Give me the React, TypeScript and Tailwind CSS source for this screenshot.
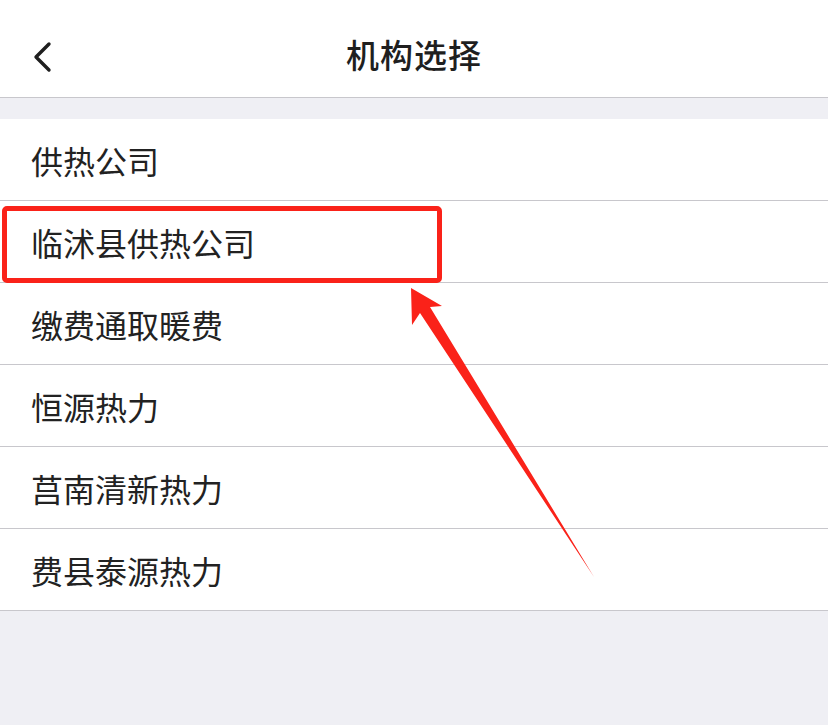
const items = ["供热公司", "临沭县供热公司", "缴费通取暖费", "恒源热力", "莒南清新热力", "费县泰源热力"];

const font = { fontFamily: '"PingFang SC", "Noto Sans CJK SC", sans-serif' };

export default function App() {
  return (
    <div className="relative min-h-[725px] w-full bg-[#efeff4]" style={font}>
      <header className="relative flex h-[98px] items-center justify-center border-b border-[#c8c7cc] bg-white pt-[11px]">
        <button className="absolute left-[28px] top-[39px] flex h-[36px] w-[28px] items-center justify-center">
          <svg width="22" height="32" viewBox="0 0 22 32" fill="none">
            <path d="M18 3 L5 16 L18 29" stroke="#1f1f1f" strokeWidth="3.4" strokeLinecap="round" strokeLinejoin="round" />
          </svg>
        </button>
        <h1 className="text-[33px] leading-none font-medium tracking-[1px] text-[#1f1f1f]">机构选择</h1>
      </header>

      <ul className="mt-[21px] bg-white">
        {items.map((name) => (
          <li
            key={name}
            className="flex h-[82px] items-center border-b border-[#c8c7cc] pl-[31px] text-[32px] leading-none text-[#222]"
          >
            {name}
          </li>
        ))}
      </ul>

      {/* annotation */}
      <div className="pointer-events-none absolute left-[2px] top-[206px] h-[77px] w-[440px] rounded-[5px] border-[5px] border-[#fa2219]" />
      <svg className="pointer-events-none absolute left-0 top-0" width="828" height="725">
        <polygon points="411,288 442,306 430,307 594,577 420,313 412,325" fill="#fa2219" />
      </svg>
    </div>
  );
}
